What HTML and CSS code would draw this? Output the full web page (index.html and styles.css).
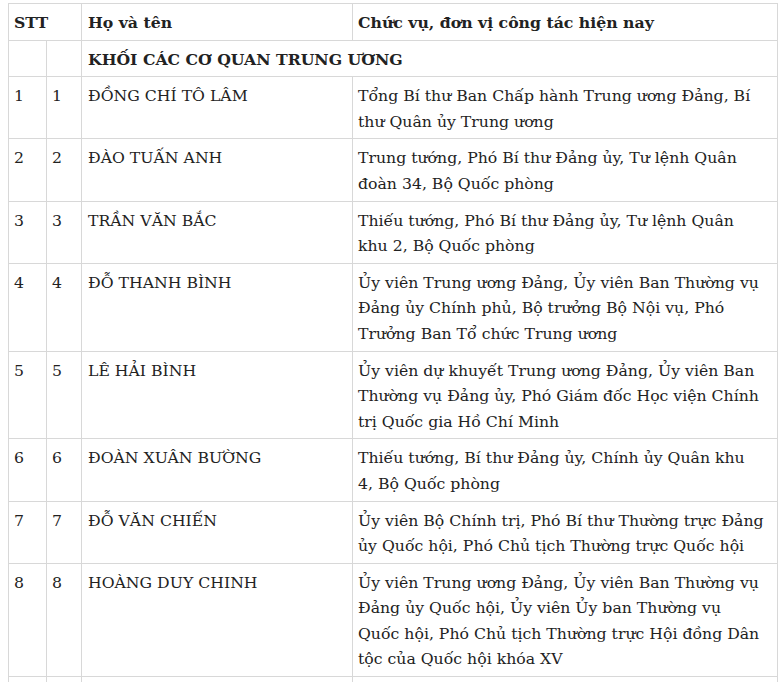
FILE: index.html
```html
<!DOCTYPE html>
<html lang="vi">
<head>
<meta charset="utf-8">
<title>Danh sách</title>
<link rel="stylesheet" href="styles.css">
</head>
<body>
<table class="list">
  <colgroup>
    <col class="c-stt1"><col class="c-stt2"><col class="c-name"><col class="c-role">
  </colgroup>
  <thead>
    <tr><th colspan="2">STT</th><th>Họ và tên</th><th>Chức vụ, đơn vị công tác hiện nay</th></tr>
  </thead>
  <tbody>
    <tr class="group"><td></td><td></td><td colspan="2">KHỐI CÁC CƠ QUAN TRUNG ƯƠNG</td></tr>
    <tr><td>1</td><td>1</td><td>ĐỒNG CHÍ TÔ LÂM</td><td>Tổng Bí thư Ban Chấp hành Trung ương Đảng, Bí thư Quân ủy Trung ương</td></tr>
    <tr><td>2</td><td>2</td><td>ĐÀO TUẤN ANH</td><td>Trung tướng, Phó Bí thư Đảng ủy, Tư lệnh Quân đoàn 34, Bộ Quốc phòng</td></tr>
    <tr><td>3</td><td>3</td><td>TRẦN VĂN BẮC</td><td>Thiếu tướng, Phó Bí thư Đảng ủy, Tư lệnh Quân khu 2, Bộ Quốc phòng</td></tr>
    <tr><td>4</td><td>4</td><td>ĐỖ THANH BÌNH</td><td>Ủy viên Trung ương Đảng, Ủy viên Ban Thường vụ Đảng ủy Chính phủ, Bộ trưởng Bộ Nội vụ, Phó Trưởng Ban Tổ chức Trung ương</td></tr>
    <tr><td>5</td><td>5</td><td>LÊ HẢI BÌNH</td><td>Ủy viên dự khuyết Trung ương Đảng, Ủy viên Ban Thường vụ Đảng ủy, Phó Giám đốc Học viện Chính trị Quốc gia Hồ Chí Minh</td></tr>
    <tr><td>6</td><td>6</td><td>ĐOÀN XUÂN BƯỜNG</td><td>Thiếu tướng, Bí thư Đảng ủy, Chính ủy Quân khu 4, Bộ Quốc phòng</td></tr>
    <tr><td>7</td><td>7</td><td>ĐỖ VĂN CHIẾN</td><td>Ủy viên Bộ Chính trị, Phó Bí thư Thường trực Đảng ủy Quốc hội, Phó Chủ tịch Thường trực Quốc hội</td></tr>
    <tr><td>8</td><td>8</td><td>HOÀNG DUY CHINH</td><td>Ủy viên Trung ương Đảng, Ủy viên Ban Thường vụ Đảng ủy Quốc hội, Ủy viên Ủy ban Thường vụ Quốc hội, Phó Chủ tịch Thường trực Hội đồng Dân tộc của Quốc hội khóa XV</td></tr>
    <tr><td>&nbsp;</td><td>&nbsp;</td><td>&nbsp;</td><td>&nbsp;</td></tr>
  </tbody>
</table>
</body>
</html>
```
FILE: styles.css
```css
html, body {
  margin: 0;
  padding: 0;
  background: #fff;
}
body {
  padding: 3px 7px 0 8px;
  font-family: "DejaVu Serif", "Liberation Serif", serif;
  font-size: 15.7px;
  color: #222;
}
.list {
  width: 769px;
  border-collapse: collapse;
  table-layout: fixed;
}
.c-stt1 { width: 38px; }
.c-stt2 { width: 35px; }
.c-name { width: 271px; }
.c-role { width: 425px; }
.list th, .list td {
  border: 1px solid #d8d8d8;
  padding: 6px 5px 4px 5px;
  line-height: 25.6px;
  text-align: left;
  vertical-align: top;
}
.list th {
  font-weight: bold;
}
.list td:nth-child(3), .list th:nth-child(2) {
  padding-left: 6px;
}
.list td:nth-child(4), .list th:nth-child(3) {
  padding-right: 13px;
}
.group td {
  font-weight: bold;
}
```
